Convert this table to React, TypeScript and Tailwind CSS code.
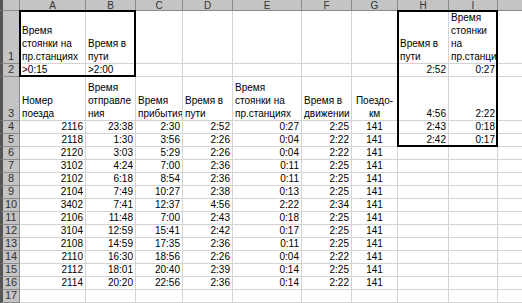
type Cell = { lines: string[]; align?: "left" | "right" | "center" };

const letters = ["A", "B", "C", "D", "E", "F", "G", "H", "I", "J"];

const t = (s: string, align: Cell["align"] = "right"): Cell => ({ lines: [s], align });
const w = (...lines: string[]): Cell => ({ lines, align: "left" });

const data: string[][] = [
  ["2116", "23:38", "2:30", "2:52", "0:27", "2:25", "141"],
  ["2118", "1:30", "3:56", "2:26", "0:04", "2:22", "141"],
  ["2120", "3:03", "5:29", "2:26", "0:04", "2:22", "141"],
  ["3102", "4:24", "7:00", "2:36", "0:11", "2:25", "141"],
  ["2102", "6:18", "8:54", "2:36", "0:11", "2:25", "141"],
  ["2104", "7:49", "10:27", "2:38", "0:13", "2:25", "141"],
  ["3402", "7:41", "12:37", "4:56", "2:22", "2:34", "141"],
  ["2106", "11:48", "7:00", "2:43", "0:18", "2:25", "141"],
  ["3104", "12:59", "15:41", "2:42", "0:17", "2:25", "141"],
  ["2108", "14:59", "17:35", "2:36", "0:11", "2:25", "141"],
  ["2110", "16:30", "18:56", "2:26", "0:04", "2:22", "141"],
  ["2112", "18:01", "20:40", "2:39", "0:14", "2:25", "141"],
  ["2114", "20:20", "22:56", "2:36", "0:14", "2:22", "141"],
];

const empty: Cell = { lines: [] };

function buildRows(): Cell[][] {
  const rows: Cell[][] = [];
  const blank = () => Array.from({ length: 10 }, () => empty);

  const r1 = blank();
  r1[0] = w("Время", "стоянки на", "пр.станциях");
  r1[1] = w("Время в", "пути");
  r1[7] = w("Время в", "пути");
  r1[8] = w("Время", "стоянки", "на", "пр.станци");
  rows.push(r1);

  const r2 = blank();
  r2[0] = t(">0:15", "left");
  r2[1] = t(">2:00", "left");
  r2[7] = t("2:52");
  r2[8] = t("0:27");
  rows.push(r2);

  const r3 = blank();
  r3[0] = w("Номер", "поезда");
  r3[1] = w("Время", "отправле", "ния");
  r3[2] = w("Время", "прибытия");
  r3[3] = w("Время в", "пути");
  r3[4] = w("Время", "стоянки на", "пр.станциях");
  r3[5] = w("Время в", "движении");
  r3[6] = { lines: ["Поездо-", "км"], align: "center" };
  r3[7] = t("4:56");
  r3[8] = t("2:22");
  rows.push(r3);

  const extra: Record<number, [string, string]> = { 0: ["2:43", "0:18"], 1: ["2:42", "0:17"] };
  data.forEach((d, i) => {
    const r = blank();
    d.forEach((v, j) => (r[j] = t(v, j === 6 ? "center" : "right")));
    if (extra[i]) {
      r[7] = t(extra[i][0]);
      r[8] = t(extra[i][1]);
    }
    rows.push(r);
  });
  rows.push(blank());
  return rows;
}

export default function App() {
  const rows = buildRows();

  return (
    <div className="h-[303px] w-[522px] overflow-hidden bg-white font-['Liberation_Sans',Arial,sans-serif] text-[10px] text-black">
      <div className="relative grid w-[556px] grid-cols-[20px_66px_50px_47px_50px_69px_50px_46px_51px_49px_58px] grid-rows-[11px_53px_13px_44px_repeat(14,13px)]">
        {/* corner */}
        <div className="border-b border-l-[3px] border-r border-[#8a8a8a] border-l-[#555] bg-[#c4c4c4]" />
        {letters.map((l) => (
          <div
            key={l}
            className="flex items-center justify-center border-b border-r border-[#8a8a8a] bg-[#c4c4c4] text-[10px] leading-[11px] text-[#333]"
          >
            {l}
          </div>
        ))}

        {rows.map((row, ri) => (
          <div key={ri} className="contents">
            <div className="flex items-end justify-center border-b border-l-[3px] border-r border-[#8a8a8a] border-l-[#555] bg-[#c4c4c4] text-[11px] leading-[13px] text-[#333]">
              {ri + 1}
            </div>
            {row.map((c, ci) => (
              <div
                key={ci}
                className={
                  "flex flex-col justify-end overflow-hidden whitespace-nowrap border-b border-r border-[#d4d4d4] px-[2px] leading-[13px] " +
                  (c.align === "right" ? "items-end" : c.align === "center" ? "items-center" : "items-start")
                }
              >
                {c.lines.map((ln, k) => (
                  <span key={k}>{ln}</span>
                ))}
              </div>
            ))}
          </div>
        ))}

        {/* selection outlines */}
        <div className="pointer-events-none absolute left-[19px] top-[10px] h-[67px] w-[117px] border-2 border-black" />
        <div className="pointer-events-none absolute left-[397px] top-[10px] h-[137px] w-[101px] border-2 border-black" />
      </div>
    </div>
  );
}
